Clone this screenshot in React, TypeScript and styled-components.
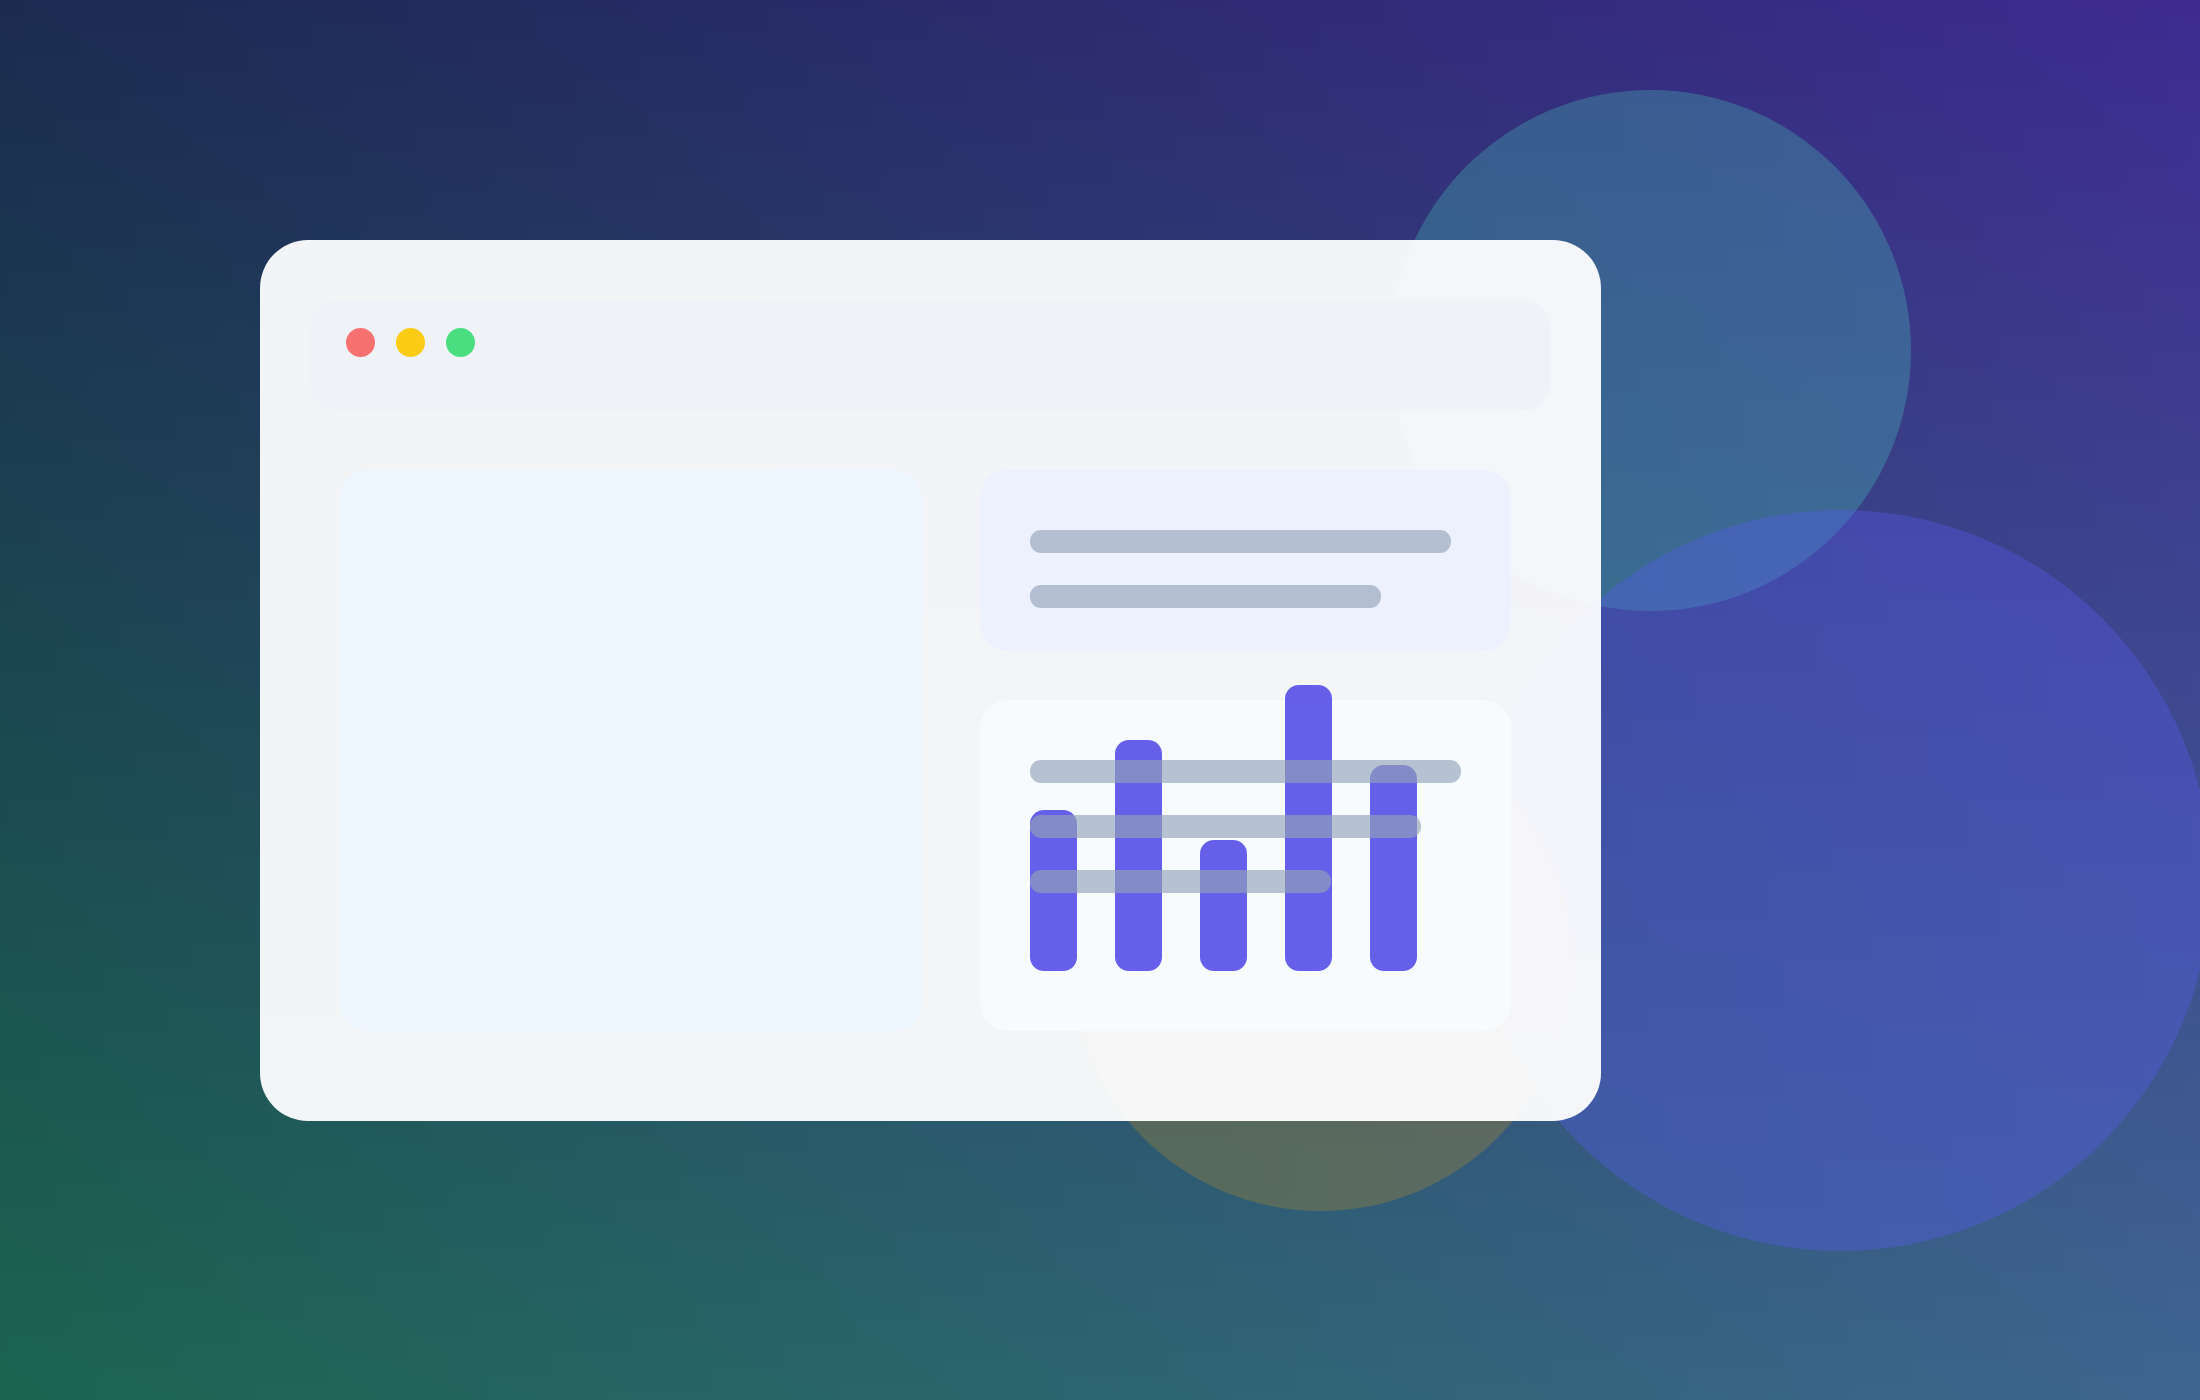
import React from 'react';
import styled, { createGlobalStyle } from 'styled-components';

const GlobalStyle = createGlobalStyle`
  *, *::before, *::after { box-sizing: border-box; }
  body { margin: 0; font-family: "Liberation Sans", Arial, sans-serif; }
`;

/* Red and blue grow to the right, green grows downwards. */
const Stage = styled.main`
  position: relative;
  min-height: 100vh;
  padding: 240px 599px 240px 260px;
  overflow: hidden;
  background-image:
    linear-gradient(to right, rgb(27, 0, 80), rgb(62, 0, 144)),
    linear-gradient(to bottom, rgb(0, 43, 0), rgb(0, 101, 0));
  background-blend-mode: screen;
`;

const Orb = styled.div<{ $size: number; $top: number; $right: number; $color: string }>`
  position: absolute;
  top: ${(p) => p.$top}px;
  right: ${(p) => p.$right}px;
  width: ${(p) => p.$size}px;
  height: ${(p) => p.$size}px;
  border-radius: 50%;
  background: ${(p) => p.$color};
`;

const Window = styled.section`
  position: relative;
  padding: 60px 50px 90px;
  border-radius: 48px;
  background: rgba(255, 255, 255, 0.945);
`;

const TitleBar = styled.header`
  display: flex;
  align-items: flex-start;
  gap: 21px;
  height: 111px;
  padding: 28px 36px;
  border-radius: 28px;
  background: #eff3f8;
`;

const WindowButton = styled.button<{ $color: string }>`
  width: 29px;
  height: 29px;
  padding: 0;
  border: 0;
  border-radius: 50%;
  background: ${(p) => p.$color};
`;

const Content = styled.div`
  display: grid;
  grid-template-columns: 582fr 531fr;
  gap: 58px;
  padding: 59px 40px 0 30px;
`;

const Column = styled.div`
  display: flex;
  flex-direction: column;
  gap: 49px;
`;

const Preview = styled.article`
  border-radius: 28px;
  background: #eef6ff;
`;

const SummaryCard = styled.article`
  padding: 60px 50px 43px;
  border-radius: 28px;
  background: #edf1fe;
`;

const ChartCard = styled.article`
  display: grid;
  padding: 60px 50px;
  border-radius: 28px;
  background: #f7fbfe;
`;

const Lines = styled.div`
  grid-area: 1 / 1;
  z-index: 1;
  display: flex;
  flex-direction: column;
  gap: 32px;
`;

const Line = styled.div<{ $width: number }>`
  width: ${(p) => p.$width}px;
  height: 23px;
  border-radius: 11px;
  background: rgba(148, 163, 184, 0.65);
`;

/* The tallest bar is meant to rise above the card. */
const Chart = styled.div`
  grid-area: 1 / 1;
  display: flex;
  align-items: flex-end;
  gap: 38px;
  height: 211px;
`;

const Bar = styled.div<{ $height: number }>`
  flex: none;
  width: 47px;
  height: ${(p) => p.$height}px;
  border-radius: 14px;
  background: rgba(79, 70, 229, 0.863);
`;

const summaryLines = [421, 351];
const chartLines = [431, 391, 301];
const bars = [161, 231, 131, 286, 206];

export default function App() {
  return (
    <>
      <GlobalStyle />
      <Stage>
        <Orb $size={521} $top={90} $right={289} $color="rgba(76, 226, 200, 0.25)" />
        <Orb $size={741} $top={510} $right={-11} $color="rgba(90, 92, 241, 0.35)" />
        <Orb $size={501} $top={710} $right={629} $color="rgba(235, 158, 11, 0.22)" />
        <Window>
          <TitleBar>
            <WindowButton type="button" aria-label="Close" $color="#f87171" />
            <WindowButton type="button" aria-label="Minimize" $color="#facc15" />
            <WindowButton type="button" aria-label="Maximize" $color="#4ade80" />
          </TitleBar>
          <Content>
            <Preview />
            <Column>
              <SummaryCard>
                <Lines>
                  {summaryLines.map((width) => (
                    <Line key={width} $width={width} />
                  ))}
                </Lines>
              </SummaryCard>
              <ChartCard>
                <Chart>
                  {bars.map((height) => (
                    <Bar key={height} $height={height} />
                  ))}
                </Chart>
                <Lines>
                  {chartLines.map((width) => (
                    <Line key={width} $width={width} />
                  ))}
                </Lines>
              </ChartCard>
            </Column>
          </Content>
        </Window>
      </Stage>
    </>
  );
}
